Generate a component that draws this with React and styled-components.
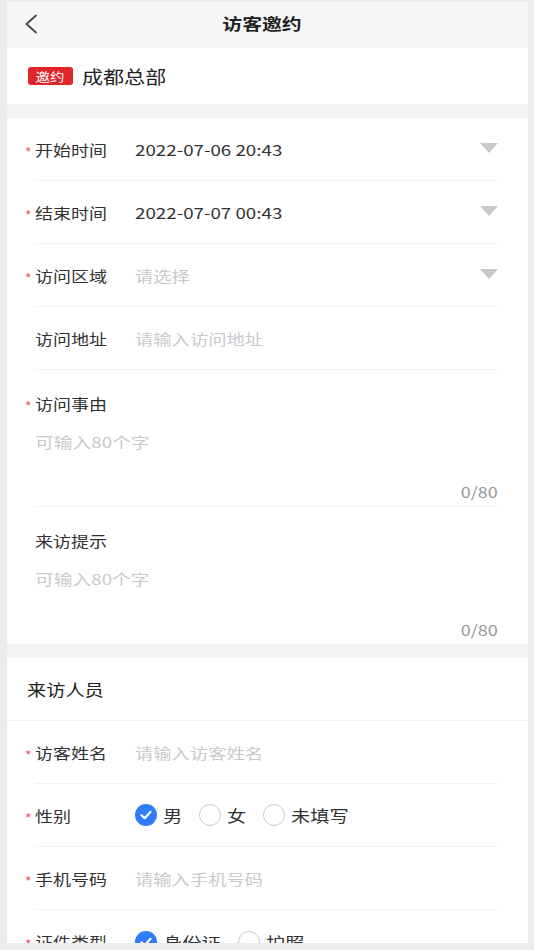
import React from 'react';
import styled, { createGlobalStyle } from 'styled-components';

const GlobalStyle = createGlobalStyle`
  html, body {
    margin: 0;
    padding: 0;
    background: #ececec;
  }
  body {
    font-family: "Noto Sans CJK SC", "Noto Sans", sans-serif;
    color: #323233;
  }
`;

// the screenshot is horizontally stretched, so text glyphs are widened
const Wide = styled.span`
  display: inline-block;
  white-space: nowrap;
  transform: scaleX(${p => p.$s || 1.2});
  transform-origin: ${p => p.$o || 'left'} center;
`;

const Screen = styled.div`
  margin: 2px 6px 0 7px;
  height: 941px;
  overflow: hidden;
  background: #f2f3f5;
`;

const NavBar = styled.div`
  height: 46px;
  background: #f7f7f8;
  display: flex;
  align-items: center;
  justify-content: center;
  position: relative;
`;

const BackButton = styled.div`
  position: absolute;
  left: 17px;
  top: 12px;
  width: 14px;
  height: 20px;
  display: flex;
`;

const Title = styled.div`
  font-size: 16px;
  font-weight: 700;
  color: #222;
  margin-right: 10px;
  padding-bottom: 5px;
`;

const SiteCard = styled.div`
  background: #fff;
  height: 56px;
  display: flex;
  align-items: center;
  padding-left: 21px;
  gap: 9px;
  margin-bottom: 14px;
`;

const Badge = styled.span`
  width: 45px;
  height: 18px;
  background: #e0262b;
  color: #fff;
  font-size: 12px;
  border-radius: 3px;
  display: flex;
  align-items: center;
  justify-content: center;
`;

const SiteName = styled.span`
  font-size: 18px;
  color: #222;
`;

const Section = styled.div`
  background: #fff;
  margin-bottom: ${p => p.$gap || 0}px;
`;

const Row = styled.div`
  margin-left: 28px;
  margin-right: 30px;
  height: 63px;
  display: flex;
  align-items: center;
  border-bottom: ${p => (p.$last ? 'none' : '1px solid #f3f3f5')};
  box-sizing: border-box;
`;

const Label = styled.div`
  width: 100px;
  flex: none;
  font-size: 15px;
  color: #323233;
  position: relative;
`;

const Star = styled.span`
  position: absolute;
  left: -10px;
  top: 3px;
  color: #f25a64;
  font-size: 14px;
`;

const Value = styled.div`
  flex: 1;
  font-size: 15px;
  color: ${p => (p.$placeholder ? '#c8c9cc' : '#323233')};
`;

const Caret = styled.div`
  width: 0;
  height: 0;
  border-left: 9px solid transparent;
  border-right: 9px solid transparent;
  border-top: 10px solid #c8c9cc;
  margin-bottom: 2px;
`;

const AreaRow = styled.div`
  margin-left: 28px;
  margin-right: 30px;
  height: ${p => p.$h}px;
  border-bottom: ${p => (p.$last ? 'none' : '1px solid #f3f3f5')};
  box-sizing: border-box;
  display: flex;
  flex-direction: column;
`;

const AreaLabel = styled(Label)`
  margin-top: 23px;
  width: auto;
`;

const AreaPlaceholder = styled.div`
  margin-top: 17px;
  font-size: 15px;
  color: #c8c9cc;
`;

const Counter = styled.div`
  margin-top: auto;
  margin-bottom: 4px;
  text-align: right;
  font-size: 15px;
  color: #969799;
`;

const SectionHeader = styled.div`
  height: 62px;
  display: flex;
  align-items: center;
  padding-left: 20px;
  font-size: 16px;
  color: #222;
  border-bottom: 1px solid #f3f3f5;
`;

const RadioGroup = styled.div`
  display: flex;
  align-items: center;
  gap: 17px;
`;

const Radio = styled.label`
  display: flex;
  align-items: center;
  gap: 6px;
  font-size: 16px;
  color: #323233;
`;

const RadioText = styled(Wide)`
  margin-right: ${p => p.$chars * 0.2}em;
`;

const Dot = styled.span`
  width: 22px;
  height: 22px;
  box-sizing: border-box;
  border-radius: 50%;
  display: inline-flex;
  align-items: center;
  justify-content: center;
  background: ${p => (p.$on ? '#2f7cf6' : '#fff')};
  border: ${p => (p.$on ? 'none' : '1px solid #c8c9cc')};
`;

const Check = () => (
  <svg width="14" height="14" viewBox="0 0 14 14">
    <path d="M2.5 7.2 L5.8 10.2 L11.5 3.8" fill="none" stroke="#fff" strokeWidth="2.2" strokeLinecap="round" strokeLinejoin="round" />
  </svg>
);

const Field = ({ label, required, value, placeholder, select, last }) => (
  <Row $last={last}>
    <Label>
      {required && <Star>*</Star>}
      <Wide>{label}</Wide>
    </Label>
    <Value $placeholder={!value}>
      <Wide $s={value ? 1.25 : 1.22}>{value || placeholder}</Wide>
    </Value>
    {select && <Caret />}
  </Row>
);

const RadioField = ({ label, options, checked, last }) => (
  <Row $last={last}>
    <Label>
      <Star>*</Star>
      <Wide>{label}</Wide>
    </Label>
    <RadioGroup>
      {options.map(o => (
        <Radio key={o}>
          <Dot $on={o === checked}>{o === checked && <Check />}</Dot>
          <RadioText $chars={o.length}>{o}</RadioText>
        </Radio>
      ))}
    </RadioGroup>
  </Row>
);

const TextArea = ({ label, required, last }) => (
  <AreaRow $h={137} $last={last}>
    <AreaLabel>
      {required && <Star>*</Star>}
      <Wide>{label}</Wide>
    </AreaLabel>
    <AreaPlaceholder>
      <Wide $s={1.25}>可输入80个字</Wide>
    </AreaPlaceholder>
    <Counter>
      <Wide $o="right">0/80</Wide>
    </Counter>
  </AreaRow>
);

const App = () => (
  <>
    <GlobalStyle />
    <Screen>
      <NavBar>
        <BackButton>
          <svg width="14" height="20" viewBox="0 0 14 20">
            <path d="M12 1.5 L2.5 10 L12 18.5" fill="none" stroke="#444" strokeWidth="1.7" strokeLinecap="round" strokeLinejoin="round" />
          </svg>
        </BackButton>
        <Title>
          <Wide $s={1.24} $o="center">访客邀约</Wide>
        </Title>
      </NavBar>

      <SiteCard>
        <Badge>
          <Wide $o="center">邀约</Wide>
        </Badge>
        <SiteName>
          <Wide $s={1.17}>成都总部</Wide>
        </SiteName>
      </SiteCard>

      <Section $gap={14}>
        <Field label="开始时间" required value="2022-07-06 20:43" select />
        <Field label="结束时间" required value="2022-07-07 00:43" select />
        <Field label="访问区域" required placeholder="请选择" select />
        <Field label="访问地址" placeholder="请输入访问地址" />
        <TextArea label="访问事由" required />
        <TextArea label="来访提示" last />
      </Section>

      <Section>
        <SectionHeader>
          <Wide>来访人员</Wide>
        </SectionHeader>
        <Field label="访客姓名" required placeholder="请输入访客姓名" />
        <RadioField label="性别" options={['男', '女', '未填写']} checked="男" />
        <Field label="手机号码" required placeholder="请输入手机号码" />
        <RadioField label="证件类型" options={['身份证', '护照']} checked="身份证" last />
      </Section>
    </Screen>
  </>
);

export default App;
